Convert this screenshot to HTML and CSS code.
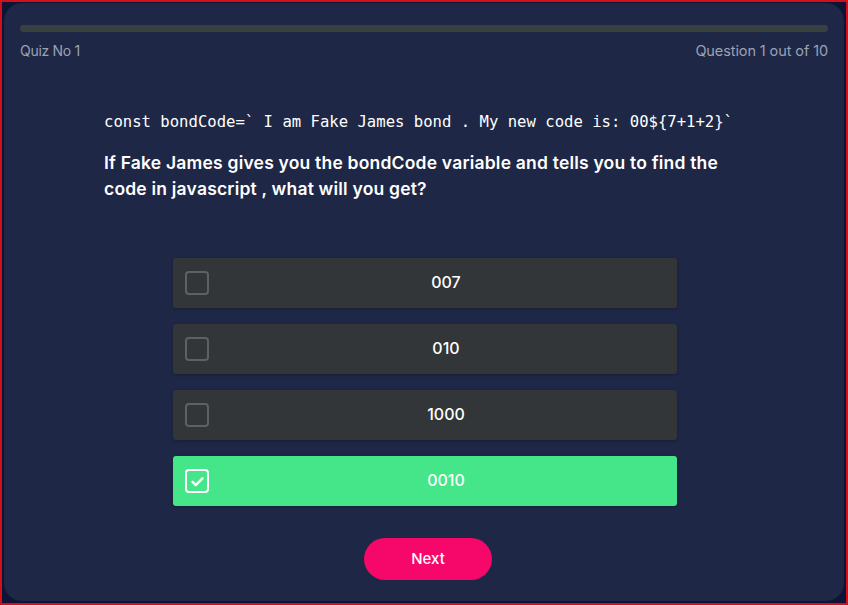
FILE: index.html
```html
<!DOCTYPE html>
<html lang="en">
<head>
<meta charset="utf-8">
<title>Quiz</title>
<link rel="stylesheet" href="styles.css">
</head>
<body>
<div class="frame">
  <main class="card">
    <div class="progress"><div class="progress-fill"></div></div>
    <div class="meta">
      <span>Quiz No 1</span>
      <span>Question 1 out of 10</span>
    </div>
    <section class="question">
      <pre class="code">const bondCode=` I am Fake James bond . My new code is: 00${7+1+2}`</pre>
      <p class="prompt">If Fake James gives you the bondCode variable and tells you to find the code in javascript , what will you get?</p>
    </section>
    <ul class="options">
      <li class="option"><span class="box"></span><span class="label">007</span></li>
      <li class="option"><span class="box"></span><span class="label">010</span></li>
      <li class="option"><span class="box"></span><span class="label">1000</span></li>
      <li class="option selected"><span class="box"><svg viewBox="0 0 24 24" width="17" height="17"><path d="M5 12.5l4.5 4.5L19 7.5" fill="none" stroke="#fff" stroke-width="3.4" stroke-linecap="round" stroke-linejoin="round"/></svg></span><span class="label">0010</span></li>
    </ul>
    <div class="actions"><button class="next">Next</button></div>
  </main>
</div>
</body>
</html>
```

FILE: styles.css
```css
* { box-sizing: border-box; }
html, body { margin: 0; padding: 0; }
body {
  width: 848px;
  height: 605px;
  font-family: "Inter", "Open Sans", sans-serif;
  background: #11163a;
}
.frame {
  width: 848px;
  height: 605px;
  border: 2px solid #d0101a;
  background: #0f1436;
  padding: 1px 2px 0 2px;
}
.card {
  height: 598px;
  background: #1e2746;
  border-radius: 18px;
  padding: 22px 16px 0 16px;
  display: flex;
  flex-direction: column;
}
.progress {
  height: 7px;
  border-radius: 4px;
  background: #3a3f3f;
  overflow: hidden;
}
.progress-fill { width: 0; height: 100%; }
.meta {
  display: flex;
  justify-content: space-between;
  margin-top: 10px;
  color: #9ca2b4;
  font-size: 14.5px;
  letter-spacing: -0.1px;
  line-height: 18px;
}
.meta span:first-child { letter-spacing: -0.3px; font-size: 14px; }
.question {
  margin: 52px 0 0 84px;
  width: 645px;
}
.code {
  margin: 0;
  font-family: "DejaVu Sans Mono", monospace;
  font-size: 15.6px;
  line-height: 20px;
  color: #ffffff;
}
.prompt {
  margin: 18px 0 0 0;
  color: #ffffff;
  font-weight: 600;
  font-size: 17.5px;
  line-height: 26px;
  letter-spacing: 0.2px;
}
.options {
  list-style: none;
  margin: 56px auto 0 auto;
  padding: 0;
  width: 504px;
  display: flex;
  flex-direction: column;
  gap: 16px;
  position: relative;
  left: 1px;
}
.option {
  height: 50px;
  background: #333638;
  border-radius: 3px;
  display: flex;
  align-items: center;
  padding-left: 12px;
  box-shadow: 0 1px 3px rgba(0,0,0,0.25);
}
.option.selected { background: #45e68a; }
.box {
  width: 24px;
  height: 24px;
  border: 2px solid #5e6163;
  border-radius: 4px;
  display: flex;
  align-items: center;
  justify-content: center;
  flex: none;
}
.selected .box { border-color: #ffffff; border-width: 2.5px; }
.label {
  flex: 1;
  margin-left: 6px;
  padding-bottom: 2px;
  text-align: center;
  color: #ffffff;
  font-size: 16px;
  font-weight: 500;
  letter-spacing: 0;
}
.actions {
  display: flex;
  justify-content: center;
  margin-top: 32px;
}
.next {
  width: 128px;
  height: 42px;
  border: none;
  border-radius: 21px;
  background: #f5086a;
  color: #ffffff;
  font-family: "Inter", sans-serif;
  font-size: 15px;
  font-weight: 500;
  margin-left: 8px;
  padding-bottom: 2px;
}
```
